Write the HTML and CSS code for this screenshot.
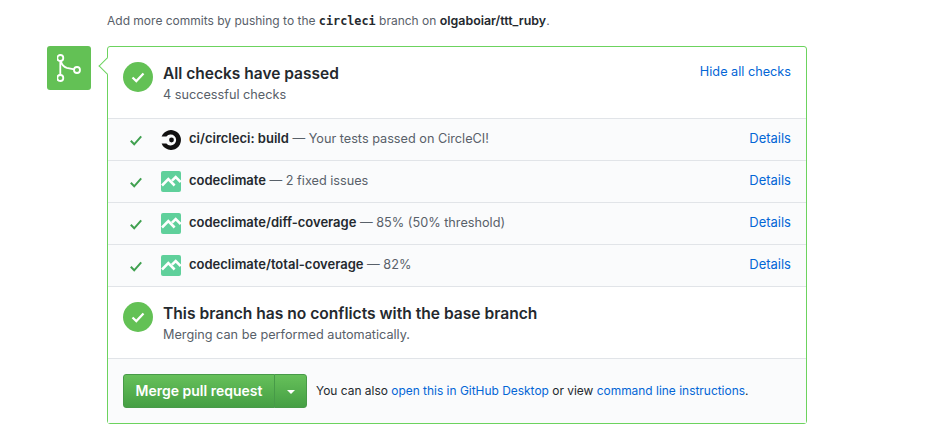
FILE: index.html
```html
<!DOCTYPE html>
<html lang="en">
<head>
  <meta charset="UTF-8" />
  <title>Merge pull request</title>
  <link rel="stylesheet" href="styles.css">
</head>
<body>
  <p class="help-text">Add more commits by pushing to the <code>circleci</code> branch on <strong>olgaboiar/ttt_ruby</strong>.</p>

  <div class="merge-row">
    <div class="merge-icon">
      <svg width="24" height="28" viewBox="0 0 24 28" fill="none" stroke="#fff" stroke-width="1.8">
        <circle cx="3.300" cy="4" r="3"/>
        <circle cx="3.300" cy="24" r="3"/>
        <circle cx="20" cy="16" r="3"/>
        <path d="M3.300 7v14M3.800 7c1 4 3 6 6 6.800l7.400 1.500"/>
      </svg>
    </div>

    <section class="merge-box">
      <div class="box-head">
        <div class="status-circle">
          <svg width="14" height="11" viewBox="0 0 14 11" fill="none" stroke="#fff" stroke-width="2.200"><path d="M1.500 5.500l3.800 3.600 7.200-7.600"/></svg>
        </div>
        <div class="status-text">
          <h3>All checks have passed</h3>
          <p>4 successful checks</p>
        </div>
        <a class="hide-link" href="#">Hide all checks</a>
      </div>

      <div class="check-row">
        <svg class="tick" width="12" height="11" viewBox="0 0 12 11" fill="none" stroke="#3fa04f" stroke-width="2"><path d="M.8 5.800l3.400 3.500 7-8"/></svg>
        <svg class="app-icon" width="20" height="20" viewBox="0 0 20 20">
          <path d="M.6 6.500a10 10 0 1 1 0 7h4.800a5.500 5.500 0 1 0 0-7z" fill="#111"/>
          <circle cx="10.500" cy="10" r="2.400" fill="#111"/>
        </svg>
        <div class="check-text"><strong>ci/circleci: build</strong> — Your tests passed on CircleCI!</div>
        <a href="#">Details</a>
      </div>
      <div class="check-row">
        <svg class="tick" width="12" height="11" viewBox="0 0 12 11" fill="none" stroke="#3fa04f" stroke-width="2"><path d="M.8 5.800l3.400 3.500 7-8"/></svg>
        <svg class="app-icon" width="20" height="21" viewBox="0 0 20 21">
          <rect width="20" height="21" rx="2" fill="#5fd09b"/>
          <path d="M1 14.500l6.300-6.300 6.300 6.300M11 9.700l3.700-3.700 5 5" fill="none" stroke="#fff" stroke-width="2.600"/>
        </svg>
        <div class="check-text"><strong>codeclimate</strong> — 2 fixed issues</div>
        <a href="#">Details</a>
      </div>
      <div class="check-row">
        <svg class="tick" width="12" height="11" viewBox="0 0 12 11" fill="none" stroke="#3fa04f" stroke-width="2"><path d="M.8 5.800l3.400 3.500 7-8"/></svg>
        <svg class="app-icon" width="20" height="21" viewBox="0 0 20 21">
          <rect width="20" height="21" rx="2" fill="#5fd09b"/>
          <path d="M1 14.500l6.300-6.300 6.300 6.300M11 9.700l3.700-3.700 5 5" fill="none" stroke="#fff" stroke-width="2.600"/>
        </svg>
        <div class="check-text"><strong>codeclimate/diff-coverage</strong> — 85% (50% threshold)</div>
        <a href="#">Details</a>
      </div>
      <div class="check-row">
        <svg class="tick" width="12" height="11" viewBox="0 0 12 11" fill="none" stroke="#3fa04f" stroke-width="2"><path d="M.8 5.800l3.400 3.500 7-8"/></svg>
        <svg class="app-icon" width="20" height="21" viewBox="0 0 20 21">
          <rect width="20" height="21" rx="2" fill="#5fd09b"/>
          <path d="M1 14.500l6.300-6.300 6.300 6.300M11 9.700l3.700-3.700 5 5" fill="none" stroke="#fff" stroke-width="2.600"/>
        </svg>
        <div class="check-text"><strong>codeclimate/total-coverage</strong> — 82%</div>
        <a href="#">Details</a>
      </div>

      <div class="box-head conflicts">
        <div class="status-circle">
          <svg width="14" height="11" viewBox="0 0 14 11" fill="none" stroke="#fff" stroke-width="2.200"><path d="M1.500 5.500l3.800 3.600 7.200-7.600"/></svg>
        </div>
        <div class="status-text">
          <h3>This branch has no conflicts with the base branch</h3>
          <p>Merging can be performed automatically.</p>
        </div>
      </div>

      <div class="box-foot">
        <div class="btn-group">
          <button class="btn-merge" type="button">Merge pull request</button>
          <button class="btn-caret" type="button" aria-label="Select merge method"><span></span></button>
        </div>
        <p>You can also <a href="#">open this in GitHub Desktop</a> or view <a href="#">command line instructions</a>.</p>
      </div>
    </section>
  </div>
</body>
</html>
```

FILE: styles.css
```css
:root {
  --green: #63c155;
  --green-border: #6cd35e;
  --blue: #0366d6;
  --text: #24292e;
  --muted: #586069;
  --line: #e1e4e8;
  --row-bg: #fafbfc;
}

body {
  margin: 0;
  background-color: #fff;
  color: var(--text);
  font-family: Inter, 'Liberation Sans', sans-serif;
  font-size: 12.700px;
}

a {
  color: var(--blue);
  text-decoration: none;
}

.help-text {
  margin: 0;
  padding: 14px 0 0 107px;
  height: 18px;
  line-height: 14px;
  color: var(--muted);
  font-size: 12px;
}

.help-text code {
  color: var(--text);
  font-family: 'DejaVu Sans Mono', monospace;
  font-size: 11.800px;
  font-weight: 700;
}

.help-text strong {
  color: var(--text);
  font-size: 12.400px;
  font-weight: 600;
}

.merge-row {
  display: flex;
  align-items: flex-start;
  gap: 16px;
  margin: 14px 0 0 47px;
}

.merge-icon {
  display: flex;
  align-items: center;
  justify-content: center;
  width: 44px;
  height: 44px;
  border-radius: 3px;
  background-color: var(--green);
}

.merge-box {
  position: relative;
  width: 698px;
  border: 1px solid var(--green-border);
  border-radius: 3px;
}

/* little arrow pointing at the merge icon */
.merge-box::before {
  content: "";
  position: absolute;
  top: 13px;
  left: -7px;
  width: 11px;
  height: 11px;
  background-color: #fff;
  border-left: 1px solid var(--green-border);
  border-bottom: 1px solid var(--green-border);
  transform: rotate(45deg);
}

.box-head {
  position: relative;
  display: flex;
  align-items: flex-start;
  gap: 10px;
  height: 71px;
  padding: 0 15px;
  border-bottom: 1px solid var(--line);
}

.status-circle {
  display: flex;
  align-items: center;
  justify-content: center;
  flex-shrink: 0;
  width: 30px;
  height: 30px;
  margin-top: 15px;
  border-radius: 50%;
  background-color: var(--green);
}

.status-text {
  flex: 1;
  padding-top: 17px;
}

.status-text h3 {
  margin: 0;
  font-size: 15.500px;
  font-weight: 600;
  line-height: 20px;
}

.status-text p {
  margin: 3px 0 0;
  color: var(--muted);
  font-size: 12.700px;
  line-height: 15px;
}

.hide-link {
  padding-top: 17px;
}

.check-row {
  display: flex;
  align-items: center;
  height: 41px;
  padding: 0 15px 0 22px;
  background-color: var(--row-bg);
  border-bottom: 1px solid var(--line);
}

.tick {
  flex-shrink: 0;
  margin: 1px 19px 0 0;
}

.app-icon {
  flex-shrink: 0;
  margin-right: 8px;
}

.check-text {
  flex: 1;
  color: var(--muted);
  padding-bottom: 3px;
}

.check-row > a {
  padding-bottom: 3px;
  font-size: 13px;
}

.check-text strong {
  color: var(--text);
  font-size: 13px;
  font-weight: 600;
}

.conflicts {
  background-color: #fff;
}

.conflicts .status-text h3 {
  font-size: 15.600px;
}

.box-foot {
  display: flex;
  align-items: center;
  gap: 9px;
  height: 64px;
  padding: 0 15px;
  background-color: var(--row-bg);
  font-size: 11.950px;
}

.box-foot p {
  margin: 0 0 1px;
}

.btn-group {
  display: flex;
}

.btn-group button {
  height: 34px;
  border: 1px solid #479a48;
  background-image: linear-gradient(#66c05a, #459f44);
  color: #fff;
  font-family: inherit;
  font-weight: 600;
}

.btn-merge {
  width: 152px;
  padding: 0 0 2px;
  border-radius: 3px 0 0 3px;
  font-size: 14px;
}

.btn-caret {
  display: flex;
  align-items: center;
  justify-content: center;
  width: 33px;
  padding: 0;
  margin-left: -1px;
  border-radius: 0 3px 3px 0;
}

.btn-caret span {
  width: 0;
  height: 0;
  margin-top: 2px;
  border-top: 4px solid #fff;
  border-left: 4px solid transparent;
  border-right: 4px solid transparent;
}
```
